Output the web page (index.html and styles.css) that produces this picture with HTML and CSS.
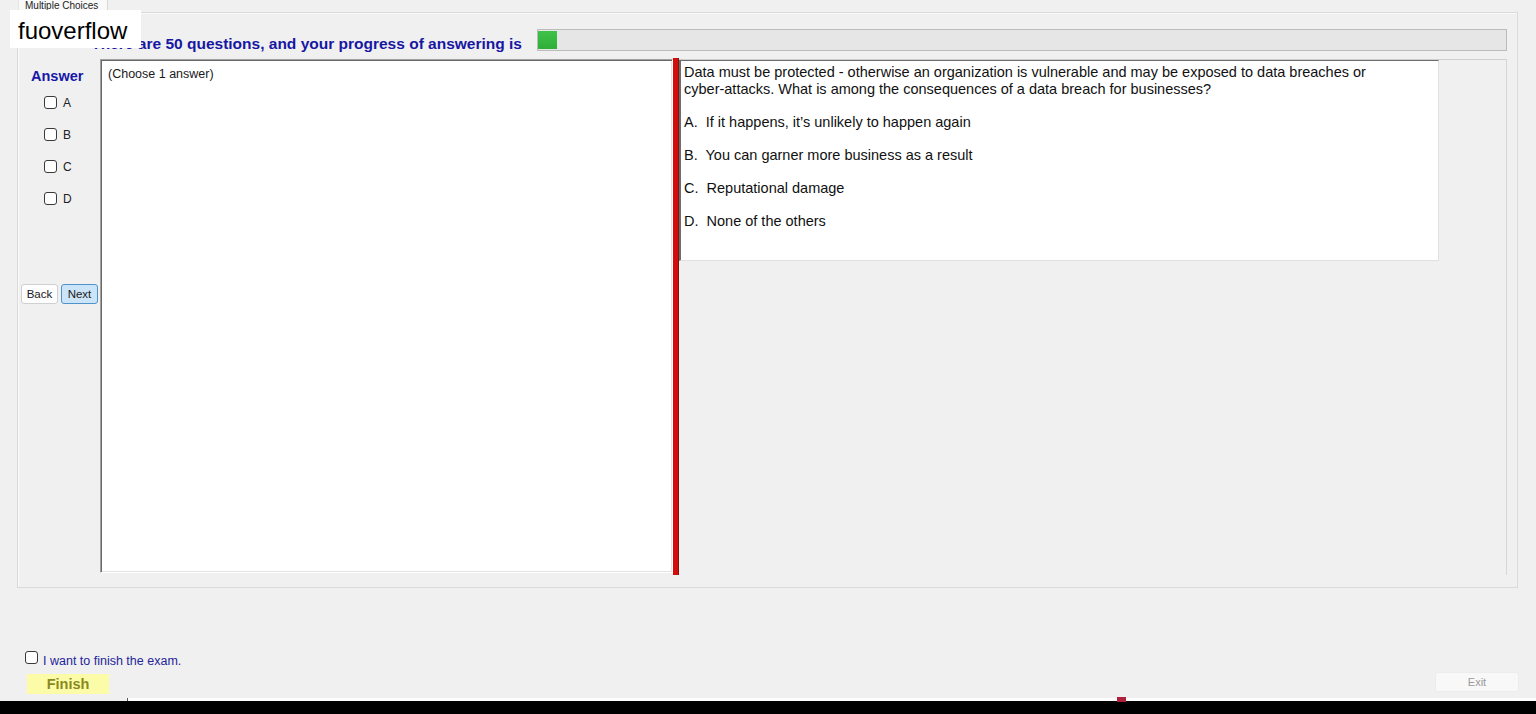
FILE: index.html
```html
<!DOCTYPE html>
<html lang="en">
<head>
    <meta charset="UTF-8">
    <title>Multiple Choices</title>
    <link rel="stylesheet" href="styles.css">
</head>
<body>
    <div class="tabs">
        <div class="tab">Multiple Choices</div>
    </div>

    <div class="tabpage">
        <div class="header">
            <div class="title">There are 50 questions, and your progress of answering is</div>
            <div class="progress"><div class="progress-fill" style="width: 2%"></div></div>
        </div>

        <div class="main">
            <div class="sidebar">
                <div class="answer-title">Answer</div>
                <div class="choices">
                    <label class="choice"><input type="checkbox"> A</label>
                    <label class="choice"><input type="checkbox"> B</label>
                    <label class="choice"><input type="checkbox"> C</label>
                    <label class="choice"><input type="checkbox"> D</label>
                </div>
                <div class="nav">
                    <button class="nav-btn">Back</button>
                    <button class="nav-btn active">Next</button>
                </div>
            </div>

            <div class="answer-box">(Choose 1 answer)</div>

            <div class="splitter"></div>

            <div class="question-pane">
                <div class="question">
                    <p>Data must be protected - otherwise an organization is vulnerable and may be exposed to data breaches or <span class="nowrap">cyber-attacks.</span> What is among the consequences of a data breach for businesses?</p>
                    <p>A.&nbsp; If it happens, it’s unlikely to happen again</p>
                    <p>B.&nbsp; You can garner more business as a result</p>
                    <p>C.&nbsp; Reputational damage</p>
                    <p>D.&nbsp; None of the others</p>
                </div>
            </div>
        </div>
    </div>

    <div class="footer">
        <label class="finish-check"><input type="checkbox"> I want to finish the exam.</label>
        <div class="footer-row">
            <button class="finish-btn">Finish</button>
            <button class="exit-btn">Exit</button>
        </div>
    </div>

    <div class="taskbar">
        <div class="taskbar-line"><span class="dot"></span></div>
        <div class="taskbar-black"></div>
    </div>

    <div class="watermark">fuoverflow</div>
</body>
</html>
```

FILE: styles.css
```css
body {
    margin: 0;
    height: 714px;
    overflow: hidden;
    background-color: #f0f0f0;
    font-family: 'Liberation Sans', Arial, sans-serif;
    color: #1a1a1a;
    display: flex;
    flex-direction: column;
}
input[type="checkbox"] {
    appearance: none;
    width: 13px;
    height: 13px;
    margin: 0;
    border: 1px solid #3a3a3a;
    border-radius: 3px;
    background-color: #fff;
    flex-shrink: 0;
}
.nowrap {
    white-space: nowrap;
}

/* tab strip */
.tabs {
    height: 12px;
    display: flex;
    padding-left: 18px;
}
.tab {
    width: 90px;
    height: 12px;
    box-sizing: border-box;
    padding-left: 6px;
    font-size: 10px;
    line-height: 11px;
    color: #222;
    background-color: #f9f9f9;
    border-right: 1px solid #d9d9d9;
    border-left: 1px solid #e4e4e4;
    overflow: hidden;
}
.tabpage {
    margin: 0 18px 0 17px;
    height: 576px;
    box-sizing: border-box;
    border: 1px solid #dadada;
    box-shadow: inset 1px 1px 0 #fafafa;
    padding: 16px 10px 0 0;
}

/* header */
.header {
    display: flex;
    align-items: flex-end;
    height: 22px;
}
.title {
    width: 504px;
    text-align: right;
    font-size: 15.5px;
    font-weight: bold;
    color: #1717a3;
    line-height: 18px;
    margin-bottom: -2px;
    white-space: nowrap;
}
.progress {
    flex: 1;
    height: 22px;
    margin-left: 15px;
    box-sizing: border-box;
    background-color: #e6e6e6;
    border: 1px solid #bcbcbc;
    padding: 1px 0 1px 0;
}
.progress-fill {
    height: 100%;
    background: linear-gradient(#3fc24a, #2fae38);
}

/* main area */
.main {
    display: flex;
    height: 516px;
    margin-top: 8px;
}
.sidebar {
    width: 82px;
    flex-shrink: 0;
    display: flex;
    flex-direction: column;
}
.answer-title {
    margin: 9px 0 0 13px;
    font-size: 14.5px;
    font-weight: bold;
    color: #1717a8;
}
.choices {
    margin: 12px 0 0 26px;
    display: flex;
    flex-direction: column;
    gap: 19px;
}
.choice {
    display: flex;
    align-items: center;
    gap: 6px;
    height: 13px;
    font-size: 12px;
    color: #222;
}
.nav {
    display: flex;
    gap: 3px;
    margin: 79px 0 0 3px;
}
.nav-btn {
    width: 37px;
    height: 20px;
    padding: 0;
    font-family: inherit;
    font-size: 11.5px;
    color: #1a1a1a;
    background-color: #fdfdfd;
    border: 1px solid #d0d0d0;
    border-radius: 3px;
}
.nav-btn.active {
    background-color: #cce4f7;
    border-color: #4f93cc;
}
.answer-box {
    width: 573px;
    height: 514px;
    box-sizing: border-box;
    flex-shrink: 0;
    background-color: #fff;
    border-top: 1px solid #a0a0a0;
    border-left: 1px solid #a0a0a0;
    border-right: 1px solid #fff;
    border-bottom: 1px solid #fff;
    box-shadow: inset 1px 1px 0 #696969, inset -1px -1px 0 #e3e3e3;
    padding: 7px 7px;
    font-size: 12.5px;
    line-height: 15px;
}
.splitter {
    width: 6px;
    flex-shrink: 0;
    margin-top: -1px;
    box-sizing: border-box;
    background-color: #d40c0c;
    border-right: 1px solid #7c1414;
}
.question-pane {
    flex: 1;
    box-sizing: border-box;
    border-top: 1px solid #cfcfcf;
    border-right: 1px solid #d6d6d6;
}
.question {
    width: 760px;
    height: 201px;
    box-sizing: border-box;
    background-color: #fff;
    border-top: 1px solid #6d6d6d;
    border-left: 2px solid #6d6d6d;
    border-right: 1px solid #e0e0e0;
    border-bottom: 1px solid #e0e0e0;
    padding: 3px 3px;
    font-size: 14.5px;
    line-height: 16.5px;
    color: #111;
}
.question p {
    margin: 0 0 16.5px 0;
}

/* footer */
.footer {
    margin-top: 66px;
    display: flex;
    flex-direction: column;
}
.finish-check {
    display: flex;
    align-items: center;
    gap: 5px;
    margin-left: 25px;
    height: 13px;
    font-size: 12.5px;
    color: #25259a;
}
.finish-check input {
    position: relative;
    top: -3px;
}
.footer-row {
    display: flex;
    justify-content: space-between;
    margin: 7px 17px 0 27px;
}
.finish-btn {
    width: 82px;
    height: 20px;
    padding: 0;
    border: none;
    background-color: #fcfca8;
    font-family: inherit;
    font-size: 14.5px;
    font-weight: bold;
    color: #8a8a1c;
}
.exit-btn {
    width: 84px;
    height: 20px;
    padding: 0;
    margin-top: -2px;
    background-color: #f8f8f8;
    border: 1px solid #ececec;
    border-radius: 3px;
    font-family: inherit;
    font-size: 11px;
    color: #9a9a9a;
}

/* bottom strip */
.taskbar {
    margin-top: auto;
}
.taskbar-line {
    height: 3px;
    margin-left: 127px;
    background-color: #fdfdfd;
    border-left: 1px solid #555;
    position: relative;
}
.dot {
    position: absolute;
    left: 989px;
    top: -1px;
    width: 9px;
    height: 5px;
    background-color: #b0203a;
}
.taskbar-black {
    height: 13px;
    background-color: #000;
}

/* overlay */
.watermark {
    position: absolute;
    top: 10px;
    left: 10px;
    width: 131px;
    height: 38px;
    box-sizing: border-box;
    padding: 7px 0 0 8px;
    background-color: #fff;
    font-size: 24px;
    line-height: 28px;
    color: #000;
}
```
